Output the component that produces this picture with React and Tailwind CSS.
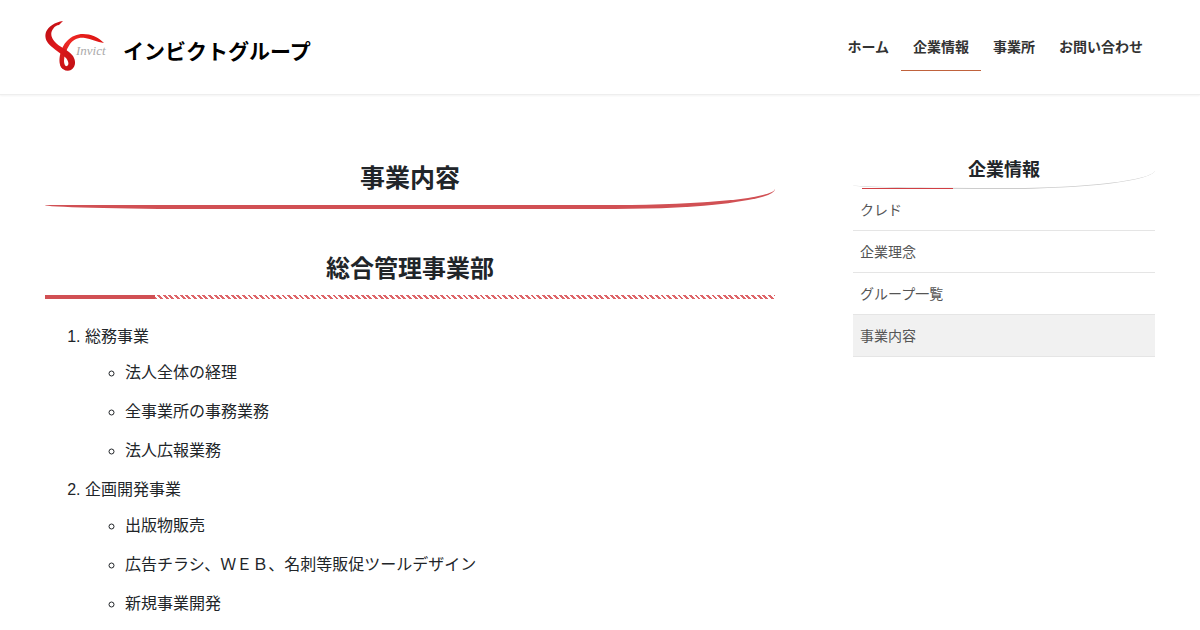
// src/App.jsx
import { clsx } from "clsx";

const navItems = [
  { label: "ホーム", href: "#home" },
  { label: "企業情報", href: "#company", active: true },
  { label: "事業所", href: "#office" },
  { label: "お問い合わせ", href: "#contact" },
];

const sideItems = [
  { label: "クレド", href: "#credo" },
  { label: "企業理念", href: "#philosophy" },
  { label: "グループ一覧", href: "#group" },
  { label: "事業内容", href: "#business", active: true },
];

const services = [
  {
    name: "総務事業",
    items: ["法人全体の経理", "全事業所の事務業務", "法人広報業務"],
  },
  {
    name: "企画開発事業",
    items: ["出版物販売", "広告チラシ、ＷＥＢ、名刺等販促ツールデザイン", "新規事業開発"],
  },
];

function Logo() {
  return (
    <a href="#home" className="flex items-center">
      <svg viewBox="0 0 78 52" className="h-[52px] w-[78px]" aria-hidden="true">
        <defs>
          <linearGradient id="band" x1="0" y1="0" x2="1" y2="1">
            <stop offset="0" stopColor="#b80d12" />
            <stop offset="0.45" stopColor="#e0181b" />
            <stop offset="1" stopColor="#c01015" />
          </linearGradient>
          <linearGradient id="arc" x1="0" y1="1" x2="1" y2="0">
            <stop offset="0" stopColor="#c41216" />
            <stop offset="0.5" stopColor="#f02a26" />
            <stop offset="1" stopColor="#d8100f" />
          </linearGradient>
        </defs>
        {/* rising arc, behind */}
        <path
          fill="url(#arc)"
          d="M18 49C14 46 14 40 15 35C16 29 19 24 22 21C27 16 32 14 38 14C46 14 53 17 59 23C52 22 46 19 40 18C33 17 28 20 25 24C21 30 19 36 19 41C19 44 20 46 22 47z"
        />
        {/* falling band and loop, in front */}
        <path
          fill="url(#band)"
          d="M18 1C10 2 3 7 1 12C-1 18 2 23 7 27C11 31 17 34 21 38C24 42 24 45 22 46C20 47 17 46 15 45C17 50 22 52 26 50C31 47 31 41 28 36C24 30 14 27 10 22C6 18 5 13 8 9C10 6 12 5 14 5z"
        />
        <text x="31" y="35" fontSize="13" fontStyle="italic" className="fill-[#aaa] font-['Liberation_Serif',serif]">
          Invict
        </text>
      </svg>
      <span className="pt-3 text-[21px] font-bold leading-8 text-black">インビクトグループ</span>
    </a>
  );
}

export default function App() {
  return (
    <div className="bg-white font-['Liberation_Sans','Noto_Sans_CJK_JP',sans-serif] text-[#212529]">
      <header className="border-b border-[#eee] shadow-xs">
        <div className="mx-auto flex max-w-[1140px] items-start justify-between px-[15px] pt-5 pb-[22px]">
          <Logo />
          <nav className="flex pt-1">
            {navItems.map(item => (
              <a
                key={item.label}
                href={item.href}
                className={clsx(
                  "border-b px-3 pt-3 pb-3 text-sm font-bold leading-[22px] text-[#333]",
                  item.active ? "border-[#c0623c]" : "border-transparent"
                )}
              >
                {item.label}
              </a>
            ))}
          </nav>
        </div>
      </header>

      <div className="mx-auto flex max-w-[1140px] items-start justify-between gap-12 px-[15px] pt-[61px]">
        <main className="w-[730px]">
          <h1 className="rounded-br-[160px_20px] rounded-bl-[160px_4px] border-b-4 border-[#d15054] pt-1 pb-[9px] text-center text-[25px] font-bold leading-9">
            事業内容
          </h1>

          <section>
            <h2 className="mt-[42px] pb-2 text-center text-2xl font-bold leading-9">総合管理事業部</h2>
            <div className="flex h-1">
              <div className="w-[15%] bg-[#d15054]" />
              <div className="flex-1 bg-[repeating-linear-gradient(45deg,#de6569_0,#de6569_2px,#fff_2px,#fff_4px)]" />
            </div>

            <ol className="mt-6 list-decimal pl-10 leading-[27px]">
              {services.map(service => (
                <li key={service.name} className="mb-3">
                  {service.name}
                  <ul className="mt-[9px] list-[circle] pl-10">
                    {service.items.map(name => (
                      <li key={name} className="mb-3">{name}</li>
                    ))}
                  </ul>
                </li>
              ))}
            </ol>
          </section>
        </main>

        {/* sidebar */}
        <aside className="w-[302px]">
          <div className="relative">
            <h2 className="rounded-br-[160px_20px] rounded-bl-[160px_4px] border-b border-[#ccc] pb-1 text-center text-lg font-bold leading-7">
              企業情報
            </h2>
            <span className="absolute bottom-0 left-[9px] h-px w-[30%] bg-[#d13f44]" />
          </div>
          <ul>
            {sideItems.map(item => (
              <li key={item.label} className={clsx("border-b border-[#e5e5e5]", item.active && "bg-[#f1f1f1]")}>
                <a href={item.href} className="block px-[7px] pt-[11px] pb-[9px] text-sm leading-[21px] text-[#555]">
                  {item.label}
                </a>
              </li>
            ))}
          </ul>
        </aside>
      </div>
    </div>
  );
}
